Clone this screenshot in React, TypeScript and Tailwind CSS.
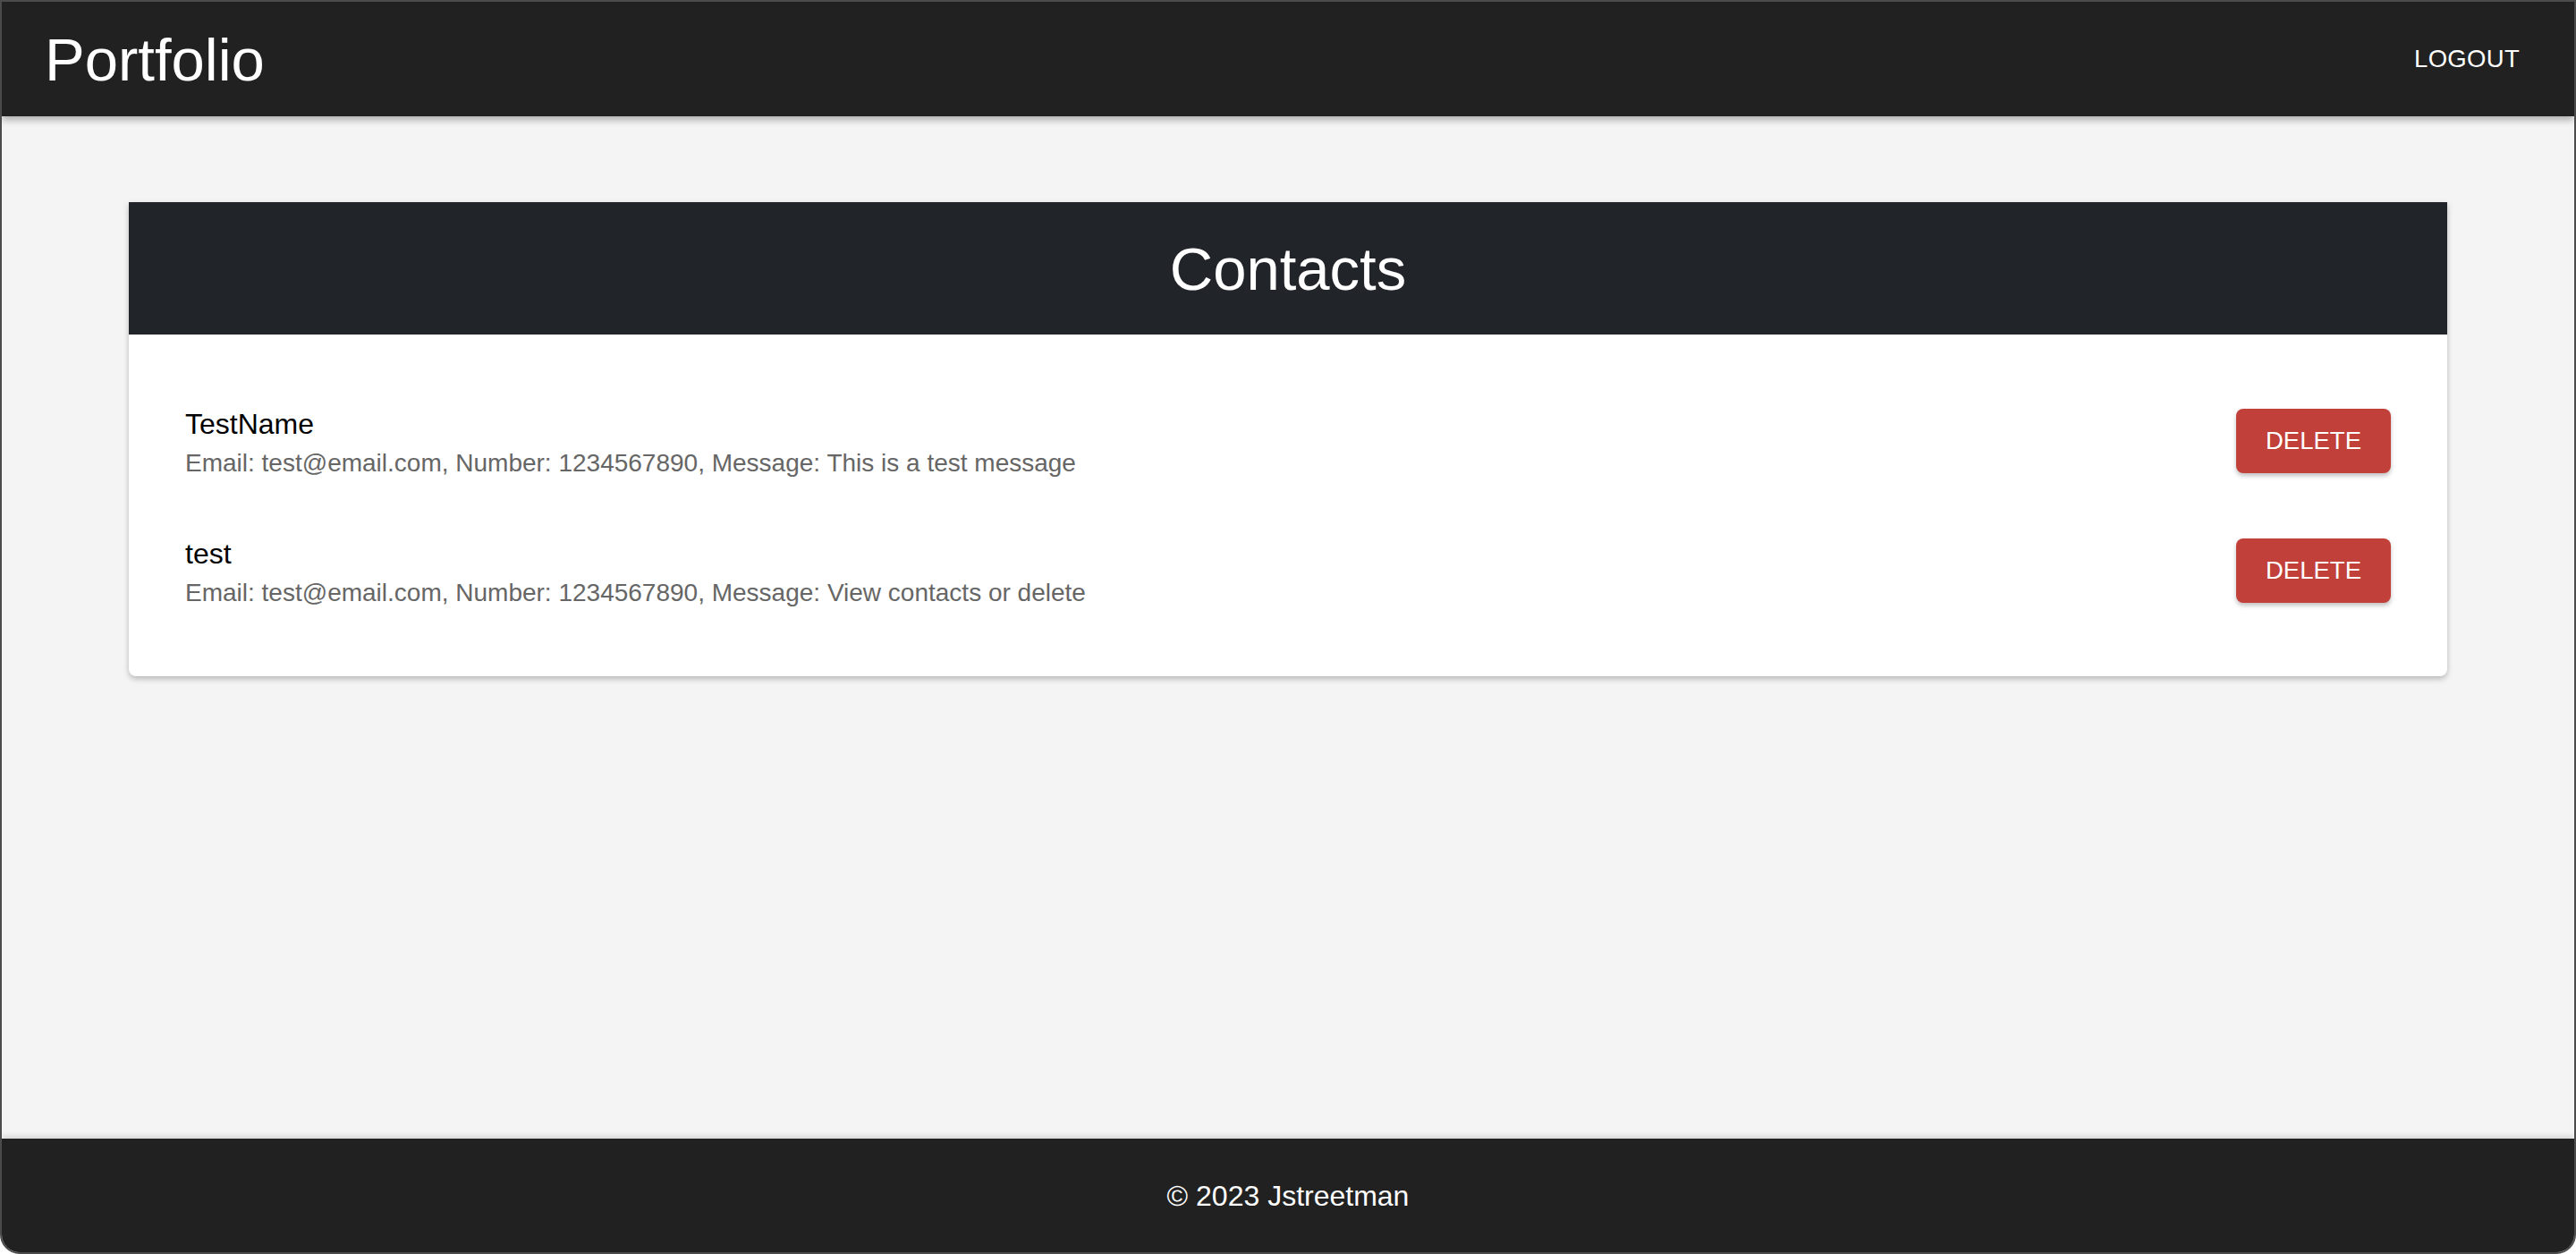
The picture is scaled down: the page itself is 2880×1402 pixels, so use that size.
import React from 'react'

interface Contact {
  name: string
  email: string
  number: string
  message: string
}

const contacts: Contact[] = [
  { name: 'TestName', email: 'test@email.com', number: '1234567890', message: 'This is a test message' },
  { name: 'test', email: 'test@email.com', number: '1234567890', message: 'View contacts or delete' },
]

export default function App() {
  return (
    <div
      className="flex h-[1402px] flex-col overflow-hidden rounded-b-[22px] border-2 border-[#4b4b4b] bg-[#f4f4f4] text-white"
      style={{ fontFamily: '"Liberation Sans", Arial, sans-serif' }}
    >
      <header className="relative z-10 flex h-[128px] shrink-0 items-center justify-between bg-[#212121] pl-[48px] pr-[61px] shadow-[0_4px_8px_rgba(0,0,0,0.3)]">
        <h1 className="text-[67px] leading-none">Portfolio</h1>
        <button className="text-[27.5px] uppercase leading-none tracking-[0.3px] text-white">Logout</button>
      </header>

      <main className="flex-1 pt-[96px]">
        <div className="mx-auto w-[2592px] rounded-b-[8px] bg-white shadow-[0_3px_6px_rgba(0,0,0,0.25)]">
          <div className="flex h-[148px] items-center justify-center bg-[#212429]">
            <h2 className="text-[67px] leading-none text-white">Contacts</h2>
          </div>
          <ul className="py-[46px] pl-[63px] pr-[63px]">
            {contacts.map(c => (
              <li key={c.name} className="flex h-[145px] items-center justify-between">
                <div className="pt-[4px]">
                  <p className="text-[32px] leading-[47px] text-black">{c.name}</p>
                  <p className="text-[28px] leading-[39.5px] text-[#666666]">
                    Email: {c.email}, Number: {c.number}, Message: {c.message}
                  </p>
                </div>
                <button className="flex h-[72px] w-[173px] items-center justify-center rounded-[8px] bg-[#c1403a] text-[27.5px] leading-none text-white shadow-[0_3px_5px_rgba(0,0,0,0.25)]">
                  DELETE
                </button>
              </li>
            ))}
          </ul>
        </div>
      </main>

      <footer className="flex h-[127px] shrink-0 items-center justify-center bg-[#212121] shadow-[0_-3px_6px_rgba(0,0,0,0.12)]">
        <p className="text-[32px] leading-none">© 2023 Jstreetman</p>
      </footer>
    </div>
  )
}
